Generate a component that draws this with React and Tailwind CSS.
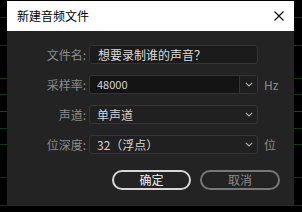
import React from "react";

const font = { fontFamily: '"Noto Sans CJK SC", "Noto Sans", sans-serif' };

function Chevron() {
  return (
    <svg width="8" height="5" viewBox="0 0 8 5" className="block">
      <path d="M0.8 0.8 L4 4 L7.2 0.8" fill="none" stroke="#b0b0b0" strokeWidth="1.1" />
    </svg>
  );
}

function Row({ label, children, suffix }) {
  return (
    <div className="flex items-center h-[19px]">
      <div className="w-[79px] text-right text-[12px] leading-[19px] text-[#8b8b8b]">{label}</div>
      <div className="ml-[3px] w-[169px] h-[19px]">{children}</div>
      {suffix && <div className="ml-[6px] text-[12px] leading-[19px] text-[#8b8b8b]">{suffix}</div>}
    </div>
  );
}

export default function App() {
  const lines = [
    { t: "top-[17px]", c: "bg-[#0e3a12]" },
    { t: "top-[45px]", c: "bg-[#0e3a12]" },
    { t: "top-[78px]", c: "bg-[#0e3a12]" },
    { t: "top-[94px]", c: "bg-[#0e3a12]" },
    { t: "top-[111px]", c: "bg-[#7a1616]" },
    { t: "top-[128px]", c: "bg-[#0e3a12]" },
    { t: "top-[144px]", c: "bg-[#0e3a12]" },
    { t: "top-[177px]", c: "bg-[#0e3a12]" },
    { t: "top-[205px]", c: "bg-[#113a13]" },
  ];
  return (
    <div className="relative w-[302px] h-[212px] bg-black overflow-hidden" style={font}>
      {lines.map((l, i) => (
        <div key={i} className={`absolute left-0 right-0 h-px ${l.t} ${l.c}`} />
      ))}
      <div className="absolute left-[7px] top-[1px] w-[287px] h-[204px] bg-[#232323] flex flex-col">
        <div className="h-[30px] bg-white flex items-center justify-between pl-[10px] pr-[10px]">
          <span className="text-[12px] text-black leading-none">新建音频文件</span>
          <svg width="10" height="10" viewBox="0 0 10 10" className="block">
            <path d="M0.5 0.5 L9.5 9.5 M9.5 0.5 L0.5 9.5" stroke="#111" strokeWidth="1.2" />
          </svg>
        </div>
        <div className="flex flex-col gap-[11px] pt-[14px]">
          <Row label="文件名:">
            <div className="h-full rounded-[3px] border border-[#343434] bg-[#1b1b1b] flex items-center pl-[8px] text-[12px] text-[#dcdcdc]">
              想要录制谁的声音？
            </div>
          </Row>
          <Row label="采样率:" suffix="Hz">
            <div className="h-full rounded-[3px] border border-[#343434] bg-[#141414] flex">
              <div className="flex-1 flex items-center pl-[7px] text-[11px] text-[#d4d4d4]">48000</div>
              <div className="w-[18px] border-l border-[#343434] bg-[#1e1e1e] flex items-center justify-center rounded-r-[3px]">
                <Chevron />
              </div>
            </div>
          </Row>
          <Row label="声道:">
            <div className="h-full rounded-[3px] border border-[#353535] bg-[#202020] flex items-center justify-between pl-[7px] pr-[4px] text-[12px] text-[#d4d4d4]">
              <span>单声道</span>
              <Chevron />
            </div>
          </Row>
          <Row label="位深度:" suffix="位">
            <div className="h-full rounded-[3px] border border-[#353535] bg-[#202020] flex items-center justify-between pl-[7px] pr-[4px] text-[12px] text-[#d4d4d4]">
              <span>32（浮点）</span>
              <Chevron />
            </div>
          </Row>
        </div>
        <div className="flex mt-[16px] pl-[105px] gap-[9px]">
          <button className="w-[79px] h-[20px] rounded-full border-2 border-[#d6d6d6] text-[12px] text-[#eeeeee] leading-none flex items-center justify-center">
            确定
          </button>
          <button className="w-[80px] h-[20px] rounded-full border-2 border-[#777777] text-[12px] text-[#8b8b8b] leading-none flex items-center justify-center">
            取消
          </button>
        </div>
      </div>
    </div>
  );
}
